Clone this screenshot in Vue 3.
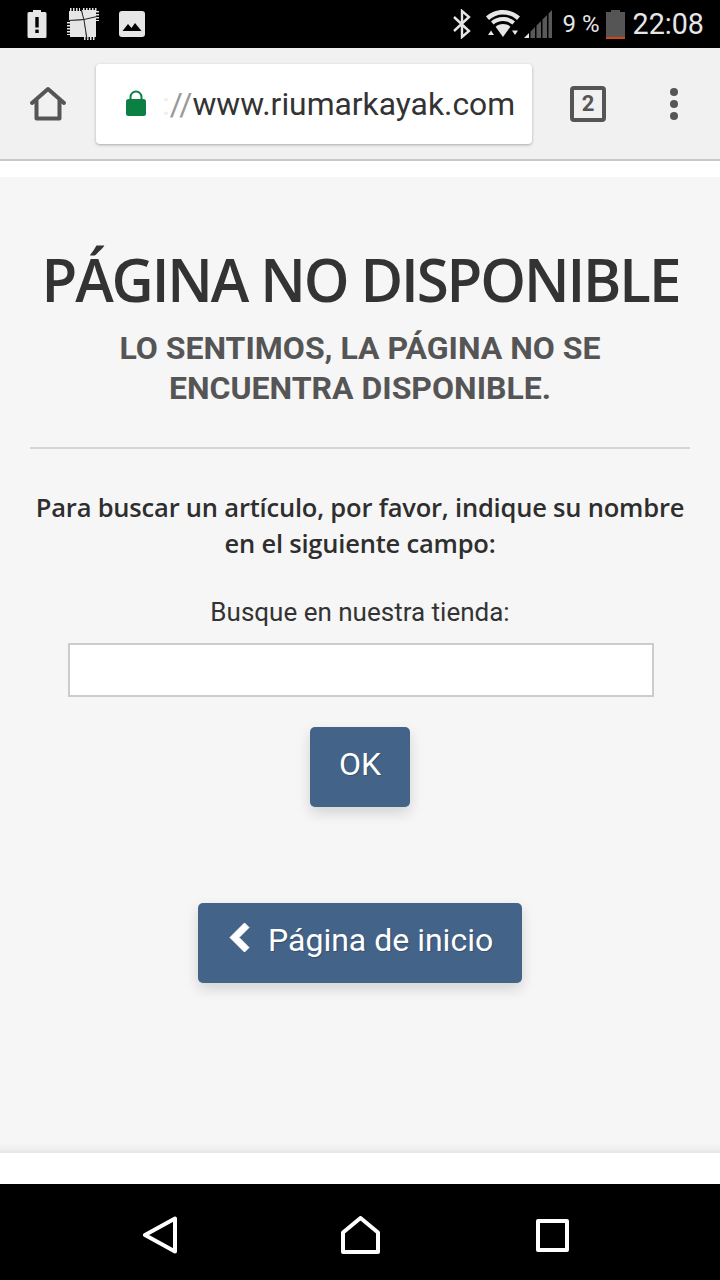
<template>
  <div class="screen">
    <!-- status bar -->
    <div class="status">
      <div class="status-left">
        <svg class="ic-alert" width="20" height="28" viewBox="0 0 20 28">
          <path fill="#e6e6e6" d="M6 0h8v2h4a1.500 1.500 0 0 1 1.500 1.500v23a1.500 1.500 0 0 1-1.500 1.500H2a1.500 1.500 0 0 1-1.500-1.500v-23A1.500 1.500 0 0 1 2 2h4z"/>
          <rect x="8.300" y="7" width="3.400" height="10.500" fill="#000"/>
          <rect x="8.300" y="19.600" width="3.400" height="3.400" fill="#000"/>
        </svg>
        <svg class="ic-quilt" width="32" height="32" viewBox="0 0 32 32">
          <g fill="#e6e6e6">
            <path d="M2 3h13l2 9-15 1z"/>
            <path d="M15 2h14v10l-12 3z"/>
            <path d="M3 13l14-1 2 17H3z"/>
            <path d="M17 14l12-3v18H19z"/>
          </g>
          <g fill="none" stroke="#e6e6e6" stroke-width="3" stroke-dasharray="1.500 1.500">
            <path d="M3 1.500h10M16 1.500h15"/>
            <path d="M30.500 3v10"/>
            <path d="M1.500 14v13"/>
            <path d="M17 30.500h11"/>
          </g>
          <path d="M14 1l3 11 3 19M1 12.500l16-1 13-3" fill="none" stroke="#222" stroke-width="1"/>
        </svg>
        <svg class="ic-image" width="26" height="26" viewBox="0 0 26 26">
          <rect width="26" height="26" rx="3" fill="#e6e6e6"/>
          <path fill="#000" d="M3.500 20l5.500-7 3.500 4 3.500-5 6.500 8z"/>
        </svg>
      </div>
      <div class="status-right">
        <svg class="ic-bt" width="20" height="30" viewBox="0 0 20 30">
          <path d="M2 8l15 14-7 6V2l7 6L2 22" fill="none" stroke="#e6e6e6" stroke-width="2.400"/>
        </svg>
        <svg class="ic-wifi" width="34" height="28" viewBox="0 0 34 28">
          <path fill="#e6e6e6" d="M17 0C10 0 4.500 2.500 0 6.500l3 3.500C7 6.500 11.500 4.500 17 4.500S27 6.500 31 10l3-3.500C29.500 2.500 24 0 17 0z"/>
          <path fill="#e6e6e6" d="M17 7c-4.800 0-8.800 1.700-12 4.500l2.600 3C10.100 12.500 13.300 11 17 11s6.900 1.500 9.400 3.500l2.600-3C25.800 8.700 21.800 7 17 7z"/>
          <path fill="#e6e6e6" d="M17 14c-3 0-5.400 1-7.400 2.700L17 27l7.400-10.300C22.400 15 20 14 17 14z"/>
          <path fill="#e6e6e6" d="M2 25l3-4.500 3 4.500zM26 20.500h6l-3 4.500z"/>
        </svg>
        <svg class="ic-signal" width="28" height="28" viewBox="0 0 28 28">
          <path fill="#e6e6e6" d="M0 28l5-5v5z"/>
          <path fill="#595959" d="M6.500 28v-6.500L11 17v11zM12.500 28V15.500L17 11v17zM18.500 28V9.500L23 5v23zM24.500 28V3.500L28 0v28z"/>
        </svg>
        <span class="pct">9 %</span>
        <div class="battery"><div class="battery-cap"></div><div class="battery-body"></div></div>
        <span class="time">22:08</span>
      </div>
    </div>

    <!-- browser toolbar -->
    <div class="toolbar">
      <svg class="ic-home" width="38" height="36" viewBox="0 0 38 36">
        <path d="M3 17L19 3l16 14M7.500 14v18.500h23V14" fill="none" stroke="#555" stroke-width="4" stroke-linecap="round" stroke-linejoin="round"/>
      </svg>
      <div class="urlbar">
        <svg class="ic-lock" width="20" height="27" viewBox="0 0 20 27">
          <path d="M4.500 10V7a5.500 5.500 0 0 1 11 0v3" fill="none" stroke="#0b8043" stroke-width="2"/>
          <rect y="9" width="20" height="17" rx="2.500" fill="#0b8043"/>
        </svg>
        <div class="url"><span class="url-colon">:</span><span class="url-fade">//</span>www.riumarkayak.com</div>
      </div>
      <div class="tabs">2</div>
      <svg class="ic-menu" width="10" height="34" viewBox="0 0 10 34">
        <circle cx="5" cy="5" r="4" fill="#555"/>
        <circle cx="5" cy="17" r="4" fill="#555"/>
        <circle cx="5" cy="29" r="4" fill="#555"/>
      </svg>
    </div>

    <!-- page -->
    <div class="page">
      <div class="content">
        <h1>PÁGINA NO DISPONIBLE</h1>
        <h2>LO SENTIMOS, LA PÁGINA NO SE<br>ENCUENTRA DISPONIBLE.</h2>
        <hr>
        <p class="lead">Para buscar un artículo, por favor, indique su nombre en el siguiente campo:</p>
        <label class="search-label">Busque en nuestra tienda:</label>
        <input class="search" type="text">
        <button class="btn btn-ok"><span>OK</span></button>
        <button class="btn btn-home">
          <svg width="21" height="31" viewBox="0 0 21 31">
            <path d="M15.500 1L20 5.500 10 15.500l10 10-4.500 4.500L1 15.500z" fill="#fff" stroke="#fff" stroke-width="1" stroke-linejoin="round"/>
          </svg>
          <span>Página de inicio</span>
        </button>
      </div>
    </div>

    <!-- nav bar -->
    <div class="navbar">
      <svg width="36" height="38" viewBox="0 0 36 38">
        <path d="M3 19L33 2.500v33z" fill="none" stroke="#fff" stroke-width="4" stroke-linejoin="round"/>
      </svg>
      <svg width="39" height="38" viewBox="0 0 39 38">
        <path d="M2 36V16.500L19.500 2 37 16.500V36z" fill="none" stroke="#fff" stroke-width="4" stroke-linejoin="round"/>
      </svg>
      <svg width="33" height="33" viewBox="0 0 33 33">
        <rect x="2" y="2" width="29" height="29" fill="none" stroke="#fff" stroke-width="4" stroke-linejoin="round"/>
      </svg>
    </div>
  </div>
</template>

<script setup>
</script>

<style>
html, body {
  margin: 0;
  background: #fff;
}
</style>

<style scoped>
.screen {
  width: 720px;
  height: 1280px;
  display: flex;
  flex-direction: column;
  overflow: hidden;
  font-family: Roboto, sans-serif;
  background: #fff;
}

.status {
  height: 48px;
  flex: none;
  background: #000;
  display: flex;
  justify-content: space-between;
  align-items: center;
  padding: 0 16px 0 27px;
  box-sizing: border-box;
  color: #e6e6e6;
}
.status-left, .status-right {
  display: flex;
  align-items: center;
}
.ic-quilt { margin-left: 20px; }
.ic-image { margin-left: 20px; }
.ic-wifi { margin-left: 14px; }
.ic-signal { margin-left: 4px; }
.pct {
  font-size: 24px;
  margin-left: 11px;
}
.battery {
  margin-left: 6px;
  width: 19px;
  height: 29px;
  display: flex;
  flex-direction: column;
  align-items: center;
}
.battery-cap {
  width: 9px;
  height: 2px;
  background: #555;
}
.battery-body {
  width: 19px;
  flex: 1;
  box-sizing: border-box;
  background: #555;
  border-bottom: 2px solid #d84315;
}
.time {
  font-size: 28.700px;
  margin-left: 8px;
}

.toolbar {
  height: 113px;
  flex: none;
  box-sizing: border-box;
  background: #f1f1f1;
  border-bottom: 2px solid #c8c8c8;
  display: flex;
  align-items: center;
  padding: 0 0 0 29px;
}
.urlbar {
  width: 436px;
  height: 80px;
  margin-left: 29px;
  background: #fff;
  border-radius: 4px;
  box-shadow: 0 1px 3px rgba(0, 0, 0, 0.3);
  display: flex;
  align-items: center;
  padding-left: 30px;
  box-sizing: border-box;
}
.url {
  margin-left: 16px;
  font-size: 31.800px;
  color: #333;
  white-space: nowrap;
}
.url-colon {
  color: #eee;
}
.url-fade {
  color: #999;
}
.tabs {
  width: 36px;
  height: 36px;
  margin-left: 38px;
  box-sizing: border-box;
  border: 4px solid #555;
  border-radius: 4px;
  color: #555;
  font: 700 22px/28px Roboto, sans-serif;
  text-align: center;
}
.ic-menu {
  margin-left: 63px;
}

.page {
  flex: 1;
  padding-top: 16px;
  min-height: 0;
}
.content {
  height: 976px;
  background: #f6f6f6;
  padding: 0 30px;
  box-sizing: border-box;
  display: flex;
  flex-direction: column;
  align-items: center;
  box-shadow: inset 0 -12px 10px -10px rgba(0, 0, 0, 0.1);
}
h1 {
  margin: 62px 0 0;
  font: 600 60px/80px "Open Sans", sans-serif;
  color: #333;
  white-space: nowrap;
  letter-spacing: -2.200px;
  transform: scaleX(0.971);
}
h2 {
  margin: 9px 0 0;
  font: 700 32px/40px Roboto, sans-serif;
  color: #555;
  text-align: center;
}
hr {
  width: 100%;
  margin: 39px 0 0;
  border: none;
  border-top: 2px solid #d4d4d4;
}
.lead {
  margin: 40px 0 0;
  font: 600 25.500px/36px "Open Sans", sans-serif;
  letter-spacing: -0.200px;
  color: #2e2e2e;
  text-align: center;
}
.search-label {
  margin-top: 33px;
  font-size: 26px;
  line-height: 36px;
  color: #333;
}
.search {
  width: 586px;
  height: 54px;
  margin: 13px 0 0 2px;
  box-sizing: border-box;
  background: #fff;
  border: 2px solid #ccc;
  outline: none;
}
.btn {
  border: none;
  background: #436389;
  color: #fff;
  border-radius: 5px;
  font-family: Roboto, sans-serif;
  font-size: 32px;
  height: 80px;
  box-shadow: 0 6px 14px rgba(0, 0, 0, 0.14);
  text-shadow: 1px 1px 1px rgba(0, 0, 0, 0.2);
  padding: 0 0 7px;
}
.btn-ok {
  width: 100px;
  margin-top: 30px;
}
.btn-home {
  width: 324px;
  margin-top: 96px;
  display: flex;
  align-items: center;
  gap: 18px;
  padding-left: 31px;
}
.btn-home svg {
  margin-top: -5px;
}

.navbar {
  height: 96px;
  flex: none;
  background: #000;
  display: flex;
  align-items: center;
  padding-left: 142px;
  padding-top: 6px;
  box-sizing: border-box;
}
.navbar svg:nth-child(2) { margin-left: 163px; }
.navbar svg:nth-child(3) { margin-left: 156px; }
</style>
